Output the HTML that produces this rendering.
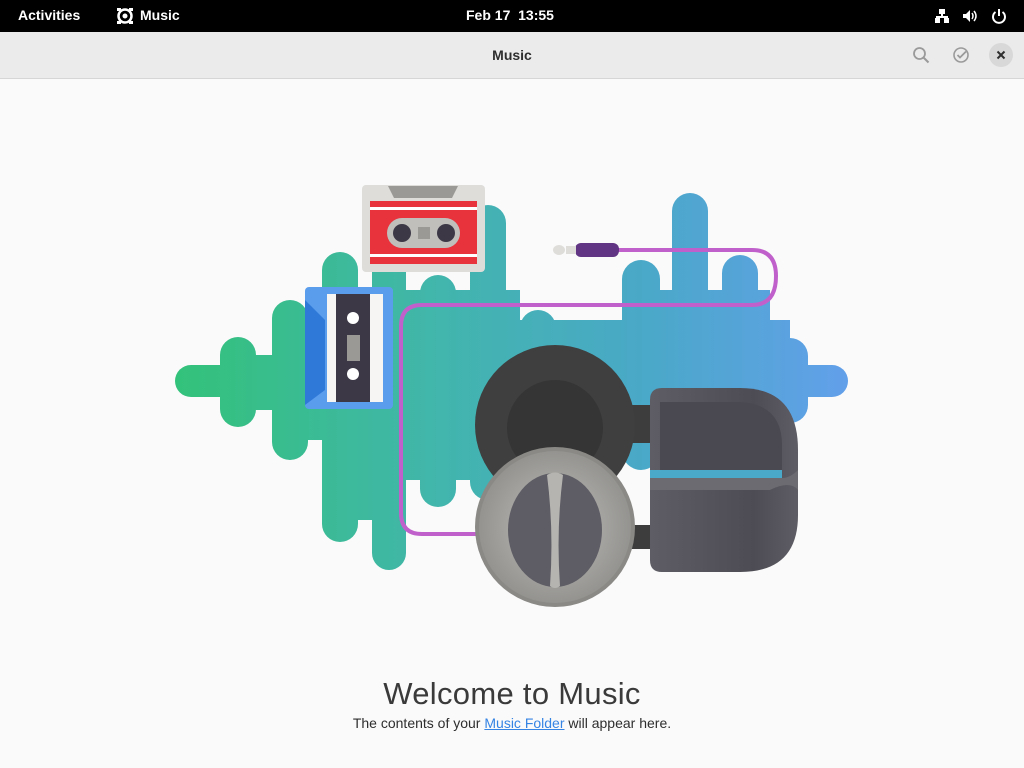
<!DOCTYPE html>
<html><head><meta charset="utf-8"><style>
*{margin:0;padding:0;box-sizing:border-box}
body{width:1024px;height:768px;overflow:hidden;background:#fafafa;font-family:"Liberation Sans",sans-serif;position:relative}
#top{position:absolute;left:0;top:0;width:1024px;height:32px;background:#000;color:#fff;font-size:14px;font-weight:bold}
#top span{position:absolute;top:7px}
#hdr{position:absolute;top:32px;left:0;width:1024px;height:47px;background:#ebebeb;border-bottom:1px solid #d6d6d6}
#hdr .t{position:absolute;left:0;width:1024px;text-align:center;top:15px;font-size:14px;font-weight:bold;color:#2e2e2e}
h1{position:absolute;top:676px;left:0;width:1024px;text-align:center;font-weight:300;font-size:31px;color:#3a3a3a;letter-spacing:0.3px}
p{position:absolute;top:715px;left:0;width:1024px;text-align:center;font-size:14px;color:#2e2e2e}
p a{color:#3584e4;text-decoration:underline}
</style></head><body>
<div id="top">
<span style="left:18px">Activities</span>
<svg style="position:absolute;left:116px;top:7px" width="18" height="18" viewBox="0 0 18 18"><circle cx="9" cy="9" r="6.5" fill="none" stroke="#fff" stroke-width="2.5"/><circle cx="9" cy="9" r="2.5" fill="#fff"/><rect x="1" y="1" width="4" height="3" fill="#fff"/><rect x="13" y="1" width="4" height="3" fill="#fff"/><rect x="1" y="14" width="4" height="3" fill="#fff"/><rect x="13" y="14" width="4" height="3" fill="#fff"/></svg>
<span style="left:140px">Music</span>
<span style="left:466px">Feb 17&nbsp; 13:55</span>
<svg style="position:absolute;left:934px;top:8px" width="16" height="16" viewBox="0 0 16 16" fill="#fff"><rect x="5" y="1" width="6" height="5"/><rect x="7" y="6" width="2" height="3"/><rect x="2" y="8" width="12" height="2"/><rect x="1" y="10" width="5" height="5"/><rect x="10" y="10" width="5" height="5"/></svg>
<svg style="position:absolute;left:962px;top:8px" width="16" height="16" viewBox="0 0 16 16"><path d="M1 6h3l4-4v12l-4-4H1z" fill="#fff"/><path d="M10 5q2 3 0 6M12 3q4 5 0 10" stroke="#fff" fill="none" stroke-width="1.5"/></svg>
<svg style="position:absolute;left:991px;top:8px" width="16" height="16" viewBox="0 0 16 16"><path d="M4.5 4a6 6 0 1 0 7 0" stroke="#fff" fill="none" stroke-width="2"/><path d="M8 1v7" stroke="#fff" stroke-width="2"/></svg>
</div>
<div id="hdr"><div class="t">Music</div>
<svg style="position:absolute;left:912px;top:14px" width="18" height="18" viewBox="0 0 18 18"><circle cx="7.5" cy="7.5" r="5.5" fill="none" stroke="#9a9a9a" stroke-width="1.8"/><path d="M11.5 11.5l5 5" stroke="#9a9a9a" stroke-width="2"/></svg>
<svg style="position:absolute;left:952px;top:14px" width="18" height="18" viewBox="0 0 18 18"><circle cx="9" cy="9" r="7" fill="none" stroke="#9a9a9a" stroke-width="1.6"/><path d="M5.5 9l2.5 2.5 6-6" stroke="#9a9a9a" fill="none" stroke-width="1.8"/></svg>
<div style="position:absolute;left:989px;top:11px;width:24px;height:24px;border-radius:12px;background:#d8d8d8"></div>
<svg style="position:absolute;left:995px;top:17px" width="12" height="12" viewBox="0 0 12 12"><path d="M2.5 2.5l7 7M9.5 2.5l-7 7" stroke="#2e2e2e" stroke-width="2"/></svg>
</div>

<svg style="position:absolute;left:0;top:0" width="1024" height="768">
<defs>
<linearGradient id="wg" gradientUnits="userSpaceOnUse" x1="175" y1="0" x2="848" y2="0"><stop offset="0" stop-color="#33c27a"/><stop offset="0.4" stop-color="#42b5ad"/><stop offset="0.7" stop-color="#4aa8c8"/><stop offset="1" stop-color="#62a0ea"/></linearGradient>
<radialGradient id="fc" cx="0.5" cy="0.5" r="0.5"><stop offset="0" stop-color="#c0bfbc"/><stop offset="1" stop-color="#949390"/></radialGradient>
<linearGradient id="hb" x1="0" y1="0" x2="1" y2="0"><stop offset="0" stop-color="#5e5c64"/><stop offset="0.7" stop-color="#4d4b53"/><stop offset="1" stop-color="#5e5c64"/></linearGradient>
</defs>
<g fill="url(#wg)">
<rect x="175" y="365" width="70" height="32" rx="16"/>
<rect x="220" y="337" width="36" height="90" rx="18"/>
<rect x="272" y="300" width="36" height="160" rx="18"/>
<rect x="322" y="252" width="36" height="290" rx="18"/>
<rect x="372" y="255" width="34" height="315" rx="17"/>
<rect x="420" y="275" width="36" height="232" rx="18"/>
<rect x="470" y="205" width="36" height="295" rx="18"/>
<rect x="520" y="310" width="36" height="110" rx="18"/>
<rect x="572" y="325" width="36" height="110" rx="18"/>
<rect x="622" y="260" width="38" height="210" rx="19"/>
<rect x="672" y="193" width="36" height="280" rx="18"/>
<rect x="722" y="255" width="36" height="220" rx="18"/>
<rect x="772" y="338" width="36" height="85" rx="18"/>
<rect x="780" y="365" width="68" height="32" rx="16"/>
<rect x="240" y="355" width="560" height="55"/>
<rect x="290" y="320" width="500" height="120"/>
<rect x="340" y="290" width="180" height="190"/>
<rect x="640" y="290" width="130" height="175"/>
<rect x="340" y="440" width="50" height="80"/>
<rect x="390" y="440" width="45" height="40"/>
</g>
<!-- cable -->
<path d="M618 250H752Q776 250 776 276Q776 305 752 305H422Q401 305 401 326V513Q401 534 422 534H485" stroke="#c061cb" stroke-width="4" fill="none"/>
<rect x="575" y="243" width="44" height="14" rx="6" fill="#613583"/>
<rect x="566" y="246" width="10" height="8" fill="#deddda"/>
<ellipse cx="559" cy="250" rx="6" ry="5" fill="#deddda"/>
<!-- red cassette -->
<rect x="362" y="185" width="123" height="87" rx="4" fill="#deddda"/>
<path d="M388 186h70l-6 12h-58z" fill="#9a9996"/>
<rect x="370" y="201" width="107" height="63" fill="#e8333c"/>
<rect x="370" y="207" width="107" height="3" fill="#fff"/>
<rect x="370" y="254" width="107" height="3" fill="#fff"/>
<rect x="387" y="218" width="73" height="30" rx="15" fill="#c0bfbc"/>
<circle cx="402" cy="233" r="9" fill="#3d3846"/><circle cx="446" cy="233" r="9" fill="#3d3846"/>
<rect x="418" y="227" width="12" height="12" fill="#9a9996"/>
<!-- blue cassette -->
<rect x="305" y="287" width="88" height="122" rx="4" fill="#5b9ded"/>
<path d="M305 300l20 20v70l-20 15z" fill="#2f7ad9"/>
<rect x="327" y="294" width="56" height="108" fill="#f6f5f4"/>
<rect x="336" y="294" width="34" height="108" fill="#3d3846"/>
<circle cx="353" cy="318" r="6" fill="#fff"/><circle cx="353" cy="374" r="6" fill="#fff"/>
<rect x="347" y="335" width="13" height="26" fill="#9a9996"/>
<!-- headphones -->
<rect x="625" y="405" width="40" height="38" fill="#3d3d3d"/>
<rect x="625" y="525" width="40" height="24" fill="#3d3d3d"/>
<circle cx="555" cy="425" r="80" fill="#3f3f3f"/>
<circle cx="555" cy="428" r="48" fill="#353535"/>
<path d="M650 400Q650 388 662 388H740Q798 388 798 450V515Q798 572 740 572H662Q650 572 650 560Z" fill="url(#hb)"/>
<path d="M660 402H735Q782 402 782 445V470H660Z" fill="#4a4850"/>
<path d="M650 470H782V478H650Z" fill="#4aa8c8"/>
<path d="M650 478H782Q790 478 798 470V490Q790 480 770 490H650Z" fill="#6c6b71"/>
<circle cx="555" cy="527" r="80" fill="#8a8986"/>
<circle cx="555" cy="527" r="76" fill="url(#fc)"/>
<ellipse cx="555" cy="530" rx="47" ry="57" fill="#5e5c64"/>
<path d="M547 475Q555 470 563 475Q556 530 560 586Q555 590 550 586Q554 530 547 475Z" fill="#b5b4b0"/>
</svg>

<h1>Welcome to Music</h1>
<p>The contents of your <a>Music Folder</a> will appear here.</p>
</body></html>
